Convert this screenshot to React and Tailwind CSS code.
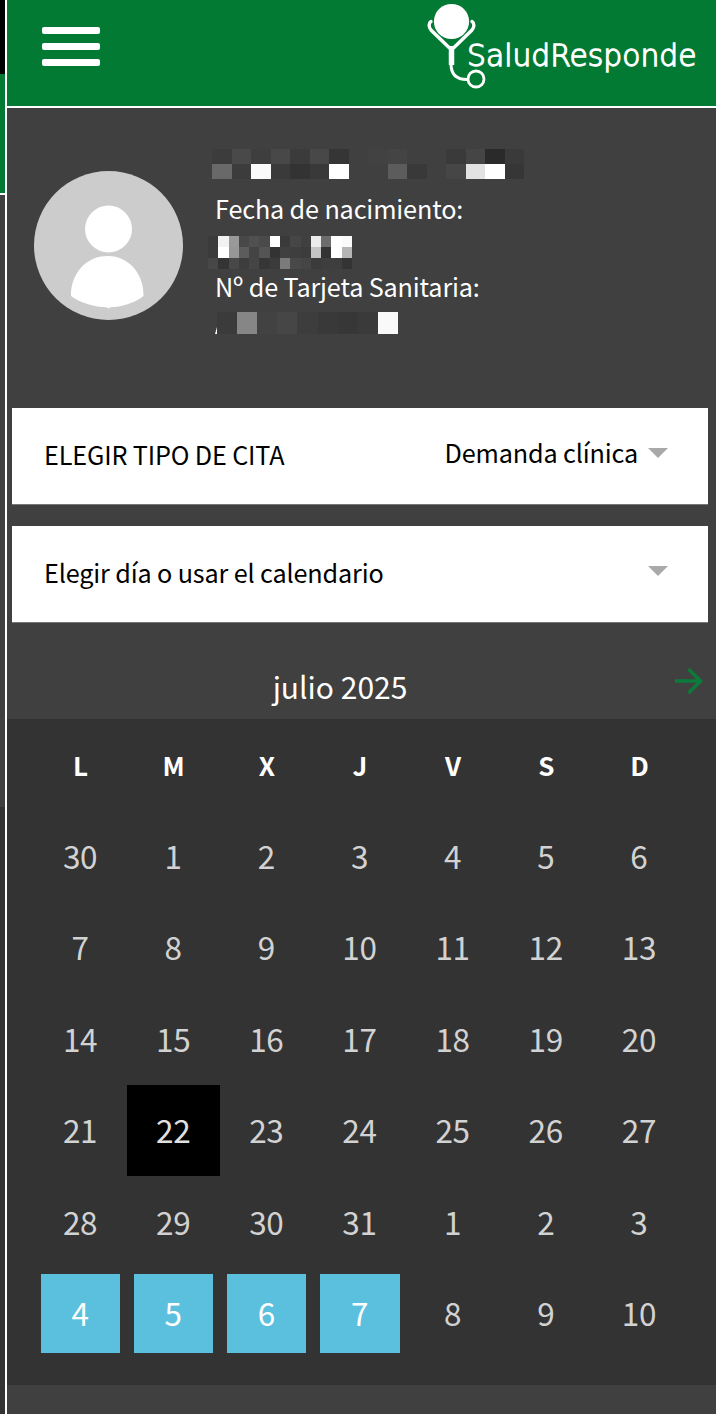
import React, { useState } from 'react';

const weekDays = ['L', 'M', 'X', 'J', 'V', 'S', 'D'];

const weeks = [
    [30, 1, 2, 3, 4, 5, 6],
    [7, 8, 9, 10, 11, 12, 13],
    [14, 15, 16, 17, 18, 19, 20],
    [21, 22, 23, 24, 25, 26, 27],
    [28, 29, 30, 31, 1, 2, 3],
    [4, 5, 6, 7, 8, 9, 10],
];

// Redacted values, one hex colour per block ('' leaves the background visible)
const nameBlocks = [
    ['#3c3c3c', '#494949', '#3e3e3e', '#484848', '#3b3b3b', '#484848', '#353535', '', '#424242', '#444444', '', '', '#3a3a3a', '#454545', '#2a2a2a', '#3a3a3a'],
    ['#696969', '#3c3c3c', '#fafafa', '#3a3a3a', '#333333', '#393939', '#ffffff', '', '', '#5c5c5c', '#393939', '', '#464646', '#e2e2e2', '#ffffff', '#363636'],
];

const birthBlocks = [
    ['#3b3b3b', '#f2f2f2', '#999999', '#484848', '#505050', '#4a4a4a', '#ffffff', '#3a3a3a', '#464646', '#404040', '#ebebeb', '#6c6c6c', '#ffffff', '#fafafa'],
    ['#3b3b3b', '#ffffff', '#969696', '#5c5c5c', '#444444', '#545454', '#333333', '#404040', '#3e3e3e', '#3c3c3c', '#c4c4c4', '#333333', '#ffffff', '#b5b5b5'],
    ['#474747', '#343434', '#484848', '#3d3d3d', '#454545', '#363636', '#3b3b3b', '#7b7b7b', '#494949', '#454545', '#3b3b3b', '#3e3e3e', '#3e3e3e', '#343434'],
];

const cardBlocks = [
    ['#3b3b3b', '#868686', '#424242', '#464646', '#3d3d3d', '#393939', '#373737', '#3a3a3a', '#f9f9f9'],
];

const Redacted = ({ rows, className }) => (
    <div className={`flex flex-col ${className}`}>
        {rows.map((row, i) => (
            <div key={i} className="flex flex-1">
                {row.map((color, j) => (
                    <div key={j} className="flex-1" style={{ backgroundColor: color || 'transparent' }}></div>
                ))}
            </div>
        ))}
    </div>
);

const Logo = () => (
    <svg width="288" height="100" viewBox="0 0 288 100" fill="none" stroke="#fff" strokeLinecap="round">
        <circle cx="31.5" cy="21.5" r="17.6" fill="#fff" stroke="none" />
        <path d="M11 21.500C8.500 23 8.500 27 11 30L29 47.500M52 21.500C54.500 23 54.500 27 52 30L34 47.500" strokeWidth="3.400" />
        <path d="M31.500 46V65" strokeWidth="5.500" strokeLinecap="butt" />
        <path d="M31 64C31 74 36 79.500 47 79.500" strokeWidth="3" />
        <circle cx="56" cy="79" r="8" strokeWidth="2.800" />
        <text
            x="47"
            y="65.500"
            fill="#fff"
            strokeWidth="1.300"
            fontFamily="'DejaVu Sans', sans-serif"
            fontWeight="200"
            fontSize="30"
            textLength="229.500"
            lengthAdjust="spacingAndGlyphs"
        >
            SaludResponde
        </text>
    </svg>
);

const Header = () => (
    <header className="flex h-[108px] shrink-0 justify-between border-b-2 border-white bg-[#037a33] pl-[35px]">
        <button className="flex h-fit flex-col gap-[9.500px] pt-[27px]">
            <span className="h-[6.500px] w-[57.500px] rounded-xs bg-white"></span>
            <span className="h-[6.500px] w-[57.500px] rounded-xs bg-white"></span>
            <span className="h-[6.500px] w-[57.500px] rounded-xs bg-white"></span>
        </button>
        <div className="mr-2">
            <Logo />
        </div>
    </header>
);

const Avatar = () => (
    <svg width="150" height="150" viewBox="0 0 150 150">
        <circle cx="74.5" cy="75.5" r="74.500" fill="#cccccc" />
        <circle cx="74.5" cy="59" r="23.500" fill="#fff" />
        <path d="M37 126C36.500 104.500 51.500 86 73.500 86S110 104.500 109.500 126C99.500 133.500 87.500 137 76.500 137.200L74.500 138.500L72.500 137.200C60.500 137 47.500 133.500 37 126Z" fill="#fff" />
    </svg>
);

const Patient = () => (
    <section className="flex h-[300px] shrink-0 pl-[27px]">
        <div className="w-[178px] pt-[62px]">
            <Avatar />
        </div>
        <div className="pt-[41px] text-[25.200px] leading-[38px] tracking-[-0.140px] text-white">
            <Redacted rows={nameBlocks} className="h-[30px] w-[312px]" />
            <p className="mt-[10px] ml-[3px] whitespace-nowrap">Fecha de nacimiento:</p>
            <Redacted rows={birthBlocks} className="mt-[9px] -ml-[4px] h-[33px] w-[144px]" />
            <p className="-mt-[2px] ml-[3px] whitespace-nowrap">Nº de Tarjeta Sanitaria:</p>
            <div className="mt-[7px] ml-[3px] flex items-end">
                <svg width="2" height="8" viewBox="0 0 2 8">
                    <path d="M0 8L2 1V8Z" fill="#fff" />
                </svg>
                <Redacted rows={cardBlocks} className="h-[22px] w-[181px]" />
            </div>
        </div>
    </section>
);

const Caret = () => (
    <svg width="20" height="10" viewBox="0 0 20 10" className="mb-[6px]">
        <path d="M0 0H20L10 10Z" fill="#a9a9a9" />
    </svg>
);

const Select = ({ label, value }) => (
    <button className="flex h-[97px] w-full shrink-0 items-center justify-between border-b border-[#777] bg-white pr-[40px] pl-8 text-[25.200px] tracking-[-0.140px] text-black">
        <span className="mb-[3px] whitespace-nowrap">{label}</span>
        <span className="flex items-center gap-[10px]">
            {value && <span className="mb-[7px] whitespace-nowrap">{value}</span>}
            <Caret />
        </span>
    </button>
);

const Calendar = () => {
    const [today] = useState('3-1');

    const dayClass = (w, d) => {
        if (`${w}-${d}` === today) return 'bg-black text-[#e0e0e0]';
        if (w === 5 && d < 4) return 'border-x-[7px] border-y-[6.500px] border-transparent bg-[#5bc0de] bg-clip-padding text-white';
        return 'text-[#d2d2d2]';
    };

    return (
        <section className="flex flex-1 flex-col">
            <div className="flex h-[96px] shrink-0 items-center justify-between">
                <h2 className="flex-1 pt-[30px] pr-[1px] text-center text-[30px] text-white">julio 2025</h2>
                <button className="mr-[12px] pt-5">
                    <svg width="30" height="30" viewBox="0 0 30 30" fill="none" stroke="#0b7a3a" strokeWidth="3.600">
                        <path d="M1 15H26M14.500 3L26.500 15L14.500 27" />
                    </svg>
                </button>
            </div>
            <div className="h-[666px] shrink-0 bg-[#333333] pr-[30px] pl-[27px]">
                <div className="grid h-[91px] grid-cols-7">
                    {weekDays.map(day => (
                        <div key={day} className="flex items-center justify-center text-[26px] font-bold text-white">{day}</div>
                    ))}
                </div>
                {weeks.map((week, w) => (
                    <div key={w} className="grid h-[91.500px] grid-cols-7 text-[31.500px] tracking-[-0.300px]">
                        {week.map((day, d) => (
                            <div key={d} className={`flex items-center justify-center ${dayClass(w, d)}`}>
                                <span className="mr-[1px] mb-[1px]">{day}</span>
                            </div>
                        ))}
                    </div>
                ))}
            </div>
        </section>
    );
};

// Sliver of the previous screen that stays visible on the left edge
const PreviousScreen = () => (
    <aside className="flex w-[5px] shrink-0 flex-col bg-[#333333]">
        <div className="h-[74px] bg-black"></div>
        <div className="h-[121px] border-b-2 border-white bg-[#037a33]"></div>
        <div className="h-[612px] bg-[#404040]"></div>
    </aside>
);

export default function App() {
    return (
        <div className="flex h-[1414px] w-[716px] overflow-hidden bg-[#404040] font-['Noto_Sans_CJK_SC','Noto_Sans',sans-serif] leading-none">
            <PreviousScreen />
            <div className="w-[2px] shrink-0 bg-white"></div>
            <main className="flex flex-1 flex-col">
                <Header />
                <Patient />
                <div className="flex flex-col gap-[21px] pr-[8px] pl-[5px]">
                    <Select label="ELEGIR TIPO DE CITA" value="Demanda clínica" />
                    <Select label="Elegir día o usar el calendario" />
                </div>
                <Calendar />
            </main>
        </div>
    );
}
